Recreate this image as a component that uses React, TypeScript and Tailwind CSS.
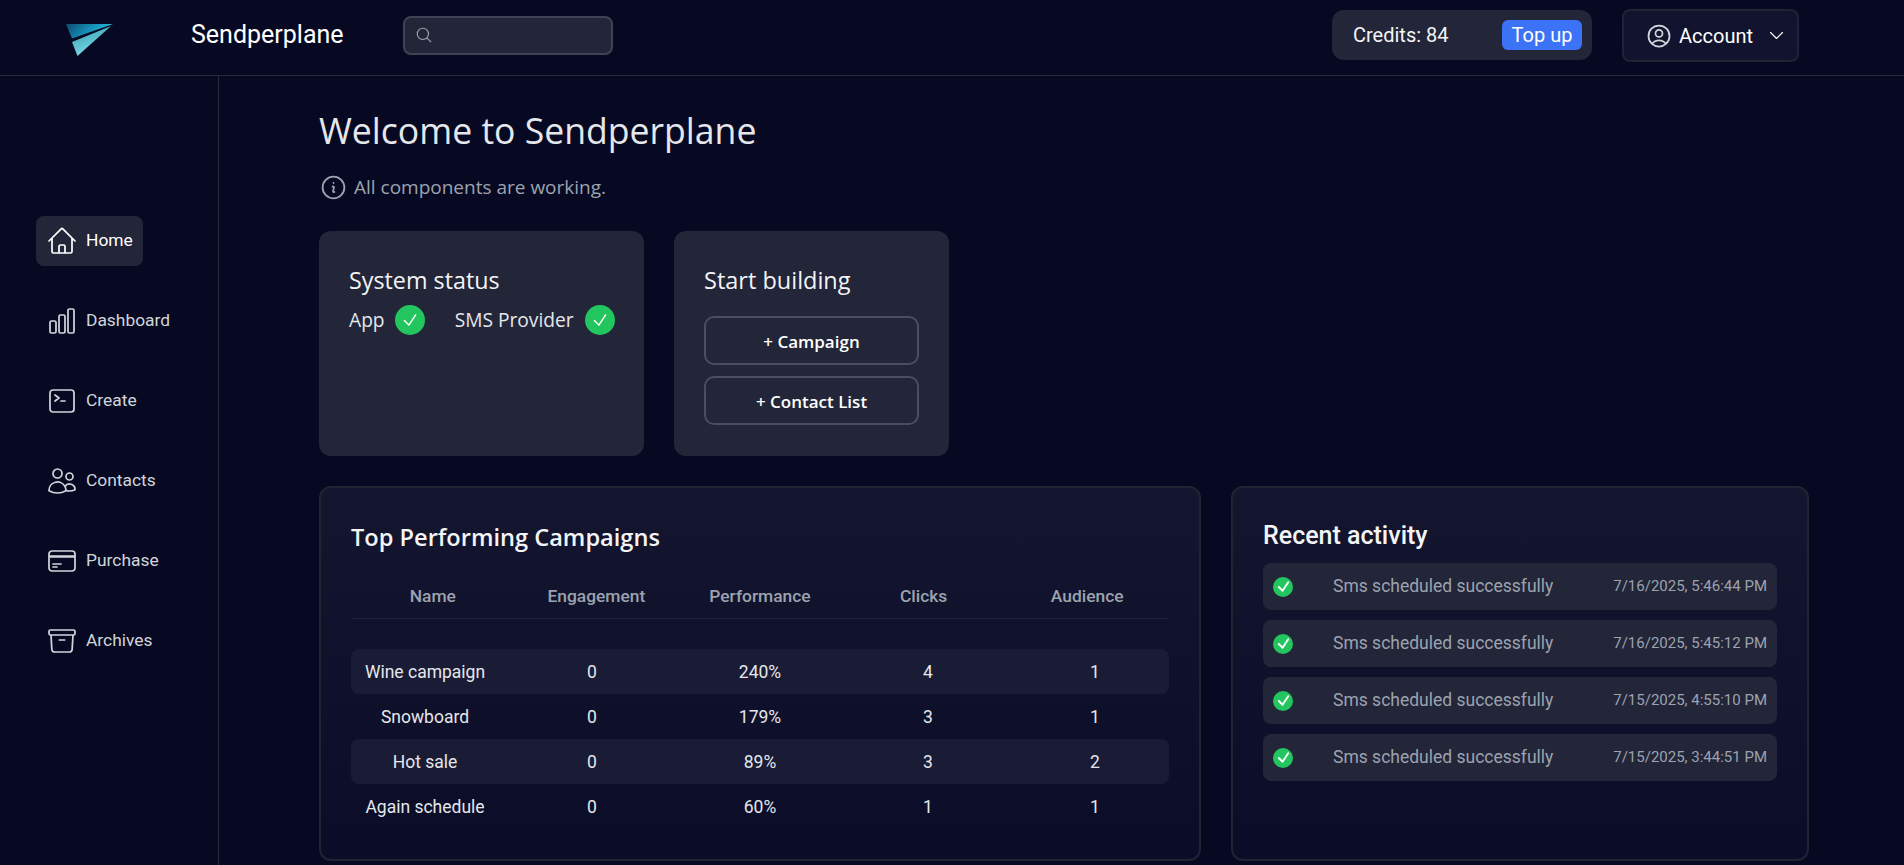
import {
  HiOutlineHome,
  HiOutlineChartBar,
  HiOutlineCommandLine,
  HiOutlineUsers,
  HiOutlineCreditCard,
  HiOutlineArchiveBox,
  HiOutlineInformationCircle,
  HiOutlineUserCircle,
  HiOutlineChevronDown,
  HiOutlineMagnifyingGlass,
  HiOutlineCheck,
} from "react-icons/hi2";

const roboto = "font-['Roboto',sans-serif]";
const segoe = "font-['Open_Sans',sans-serif]";

const navItems = [
  { label: "Home", icon: HiOutlineHome, active: true },
  { label: "Dashboard", icon: HiOutlineChartBar },
  { label: "Create", icon: HiOutlineCommandLine },
  { label: "Contacts", icon: HiOutlineUsers },
  { label: "Purchase", icon: HiOutlineCreditCard },
  { label: "Archives", icon: HiOutlineArchiveBox },
];

const campaigns = [
  { name: "Wine campaign", eng: 0, perf: "240%", clicks: 4, aud: 1 },
  { name: "Snowboard", eng: 0, perf: "179%", clicks: 3, aud: 1 },
  { name: "Hot sale", eng: 0, perf: "89%", clicks: 3, aud: 2 },
  { name: "Again schedule", eng: 0, perf: "60%", clicks: 1, aud: 1 },
];

const activity = ["7/16/2025, 5:46:44 PM", "7/16/2025, 5:45:12 PM", "7/15/2025, 4:55:10 PM", "7/15/2025, 3:44:51 PM"];

const Logo = () => (
  <svg width="47" height="32" viewBox="0 0 47 32">
    <defs>
      <linearGradient id="planeTop" x1="0" y1="0" x2="1" y2="0.3">
        <stop offset="0" stopColor="#0c4a6e" />
        <stop offset="0.55" stopColor="#168fb8" />
        <stop offset="1" stopColor="#2cc0e0" />
      </linearGradient>
      <linearGradient id="planeBottom" x1="0" y1="0" x2="0.5" y2="1">
        <stop offset="0" stopColor="#2f97b0" />
        <stop offset="1" stopColor="#7fdfe8" />
      </linearGradient>
    </defs>
    <polygon points="0,0 47,0 6,14.5" fill="url(#planeTop)" />
    <polygon points="6,18 45,2 11.5,32" fill="url(#planeBottom)" />
  </svg>
);

const StatusCheck = () => (
  <span className="flex h-[30px] w-[30px] items-center justify-center rounded-full bg-[#22c55e]">
    <HiOutlineCheck className="h-[18px] w-[18px] stroke-2 text-white" />
  </span>
);

const App = () => {
  return (
    <div className={`h-[865px] overflow-hidden bg-[#070922] text-white ${roboto}`}>
      <header className="flex h-[76px] items-center border-b border-[#252b3b] pb-[5px]">
        <div className="mt-[10px] flex w-[191px] justify-start pl-[66px]">
          <Logo />
        </div>
        <span className="w-[212px] text-[25px] text-white">Sendperplane</span>
        <div className="flex h-[39px] w-[210px] items-center rounded-lg border-2 border-[#3f4354] bg-[#232539] pl-[10px]">
          <HiOutlineMagnifyingGlass className="h-[18px] w-[18px] text-[#9ca3af]" />
        </div>
        <div className="ml-[719px] flex h-[50px] w-[260px] items-center justify-between rounded-xl bg-[#232539] pl-[21px] pr-[10px] text-[20px]">
          <span className="text-[#f3f4f6]">Credits: 84</span>
          <span className="flex h-[30px] w-[80px] items-center justify-center rounded-md bg-[#3b72f6] text-white">Top up</span>
        </div>
        <div className="ml-[30px] flex h-[53px] w-[177px] items-center rounded-lg border-2 border-[#1f2433] bg-[#12132e] pl-[21px] pt-px text-[20px]">
          <HiOutlineUserCircle className="h-[28px] w-[28px] text-[#d1d5db]" />
          <span className="ml-[6px]">Account</span>
          <HiOutlineChevronDown className="ml-[14px] h-[19px] w-[19px]" />
        </div>
      </header>

      <div className="flex h-[789px]">
        <aside className="w-[219px] shrink-0 border-r border-[#272b3b] pl-[36px] pt-[140px]">
          <nav className="flex flex-col gap-[30px]">
            {navItems.map((item) => (
              <div
                key={item.label}
                className={`flex h-[50px] items-center pl-[10px] text-[17.4px] ${
                  item.active ? "w-[107px] rounded-lg bg-[#232539] text-white" : "text-[#d1d5db]"
                }`}
              >
                <item.icon className="h-[32px] w-[32px] shrink-0 stroke-[1.3]" />
                <span className="ml-[8px] -mt-px">{item.label}</span>
              </div>
            ))}
          </nav>
        </aside>

        <main className="pl-[100px]">
          <h1 className={`mt-[29px] text-[35.6px] leading-[50px] text-[#e5e7eb] ${segoe}`}>Welcome to Sendperplane</h1>
          <div className={`mt-[19px] flex h-[26px] items-center gap-[6px] text-[19px] text-[#9ca3af] ${segoe}`}>
            <HiOutlineInformationCircle className="h-[29px] w-[29px]" />
            <span>All components are working.</span>
          </div>

          <div className={`mt-[31px] flex gap-[30px] ${segoe}`}>
            <section className="h-[225px] w-[325px] rounded-xl bg-[#232539] pl-[30px] pt-[32px]">
              <h2 className="text-[23.3px] leading-[34px] text-[#f3f4f6]">System status</h2>
              <div className="mt-[8px] flex items-center text-[19.2px] text-[#e5e7eb]">
                <span>App</span>
                <span className="ml-[10px]"><StatusCheck /></span>
                <span className="ml-[30px]">SMS Provider</span>
                <span className="ml-[11px]"><StatusCheck /></span>
              </div>
            </section>
            <section className="h-[225px] w-[275px] rounded-xl bg-[#232539] px-[30px] pt-[32px]">
              <h2 className="text-[23.5px] leading-[34px] text-[#f3f4f6]">Start building</h2>
              <div className="mt-[19px] flex flex-col gap-[11px]">
                <button className="h-[49px] rounded-[10px] border-2 border-[#4b4e5e] pt-[3px] text-[17px] font-semibold">+ Campaign</button>
                <button className="h-[49px] rounded-[10px] border-2 border-[#4b4e5e] pt-[3px] text-[17px] font-semibold">+ Contact List</button>
              </div>
            </section>
          </div>

          <div className="mt-[30px] flex gap-[30px]">
            <section className="h-[375px] w-[882px] rounded-xl border-2 border-[#1f2433] bg-gradient-to-b from-[#14152f] to-[#0b0d28] px-[30px] pt-[32px]">
              <h2 className={`text-[23.6px] font-semibold leading-[34px] text-[#f3f4f6] ${segoe}`}>Top Performing Campaigns</h2>
              <div className="mt-[27px] grid h-[38px] grid-cols-5 border-b border-[#1f2433] text-center text-[17.4px] font-medium leading-[30px] text-[#9ca3af]">
                <span>Name</span>
                <span>Engagement</span>
                <span>Performance</span>
                <span>Clicks</span>
                <span>Audience</span>
              </div>
              <div className="mt-[30px] text-[17.5px] text-[#e5e7eb]">
                {campaigns.map((c, i) => (
                  <div
                    key={c.name}
                    className={`grid h-[45px] grid-cols-[148px_186px_150px_186px_148px] items-center rounded-lg pt-px text-center ${
                      i % 2 === 0 ? "bg-[#1a1b35]" : ""
                    }`}
                  >
                    <span>{c.name}</span>
                    <span>{c.eng}</span>
                    <span>{c.perf}</span>
                    <span>{c.clicks}</span>
                    <span>{c.aud}</span>
                  </div>
                ))}
              </div>
            </section>

            <section className="h-[375px] w-[578px] rounded-xl border-2 border-[#1f2433] bg-gradient-to-b from-[#14152f] to-[#0b0d28] px-[30px] pt-[31px]">
              <h2 className="text-[25px] font-medium leading-[34px] text-[#f3f4f6]">Recent activity</h2>
              <div className="mt-[10px] flex flex-col gap-[10px]">
                {activity.map((date) => (
                  <div key={date} className="flex h-[47px] items-center rounded-lg bg-[#232539] pl-[10px] pr-[10px]">
                    <span className="flex h-[20px] w-[20px] items-center justify-center rounded-full bg-[#22c55e]">
                      <HiOutlineCheck className="h-[15px] w-[15px] stroke-[3] text-white" />
                    </span>
                    <span className="ml-[40px] text-[17.5px] text-[#9ca3af]">Sms scheduled successfully</span>
                    <span className="ml-auto text-[15px] text-[#9ca3af]">{date}</span>
                  </div>
                ))}
              </div>
            </section>
          </div>
        </main>
      </div>
    </div>
  );
};

export default App;
